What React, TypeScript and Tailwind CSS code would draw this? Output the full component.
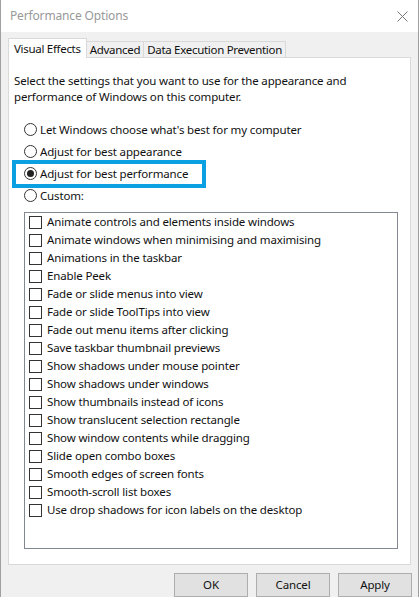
const radios = [
  { label: "Let Windows choose what's best for my computer", checked: false },
  { label: 'Adjust for best appearance', checked: false },
  { label: 'Adjust for best performance', checked: true },
  { label: 'Custom:', checked: false },
];

const effects = [
  'Animate controls and elements inside windows',
  'Animate windows when minimising and maximising',
  'Animations in the taskbar',
  'Enable Peek',
  'Fade or slide menus into view',
  'Fade or slide ToolTips into view',
  'Fade out menu items after clicking',
  'Save taskbar thumbnail previews',
  'Show shadows under mouse pointer',
  'Show shadows under windows',
  'Show thumbnails instead of icons',
  'Show translucent selection rectangle',
  'Show window contents while dragging',
  'Slide open combo boxes',
  'Smooth edges of screen fonts',
  'Smooth-scroll list boxes',
  'Use drop shadows for icon labels on the desktop',
];

function Radio({ checked }: { checked: boolean }) {
  return (
    <span className="w-[13px] h-[13px] rounded-full border border-[#333] bg-white flex items-center justify-center shrink-0">
      {checked && <span className="w-[7px] h-[7px] rounded-full bg-[#222]" />}
    </span>
  );
}

export default function App() {
  return (
    <div
      className="w-[419px] h-[597px] overflow-hidden bg-[#f0f0f0] border-l border-r border-[#a0a0a0] text-[11.5px] tracking-[-0.15px] text-[#111] flex flex-col"
      style={{ fontFamily: '"Noto Sans", "Open Sans", sans-serif' }}
    >
      {/* title bar */}
      <div className="h-[32px] bg-white flex items-center justify-between pl-[9px] pr-[9px] shrink-0">
        <span className="text-[#999] text-[12px]">Performance Options</span>
        <svg width="11" height="11" viewBox="0 0 11 11" className="mr-[1px]">
          <path d="M0.5 0.5 L10.5 10.5 M10.5 0.5 L0.5 10.5" stroke="#777" strokeWidth="1" />
        </svg>
      </div>

      {/* tabs */}
      <div className="flex items-end pl-[7px] pt-[6px] h-[25px] shrink-0 tracking-[-0.3px]">
        <div className="h-[20px] px-[5px] bg-white border border-b-0 border-[#d9d9d9] flex items-center relative z-10 -mb-px">
          Visual Effects
        </div>
        <div className="h-[16px] px-[3px] border border-l-0 border-b-0 border-[#d9d9d9] flex items-center">Advanced</div>
        <div className="h-[16px] px-[3px] border border-l-0 border-b-0 border-[#d9d9d9] flex items-center">
          Data Execution Prevention
        </div>
      </div>

      {/* panel */}
      <div className="ml-[7px] w-[403px] h-[508px] bg-white border border-[#d9d9d9] relative shrink-0">
        <p className="pl-[5px] pt-[15px] leading-[16px]">
          Select the settings that you want to use for the appearance and
          <br />
          performance of Windows on this computer.
        </p>

        <div className="pl-[15px] pt-[18px] flex flex-col gap-[9px]">
          {radios.map((r) => (
            <div key={r.label} className="flex items-center gap-[3px] h-[13px]">
              <Radio checked={r.checked} />
              <span className="leading-[16px]">{r.label}</span>
            </div>
          ))}
        </div>

        {/* highlight annotation */}
        <div className="absolute left-[3px] top-[102px] w-[194px] h-[28px] border-4 border-[#0ba0e2]" />

        <div className="ml-[15px] mt-[10px] w-[374px] h-[337px] border border-[#828790]">
          {effects.map((e) => (
            <div key={e} className="h-[18px] flex items-center pl-[4px] gap-[5px]">
              <span className="w-[13px] h-[13px] border border-[#333] bg-white shrink-0" />
              <span>{e}</span>
            </div>
          ))}
        </div>
      </div>

      {/* buttons */}
      <div className="flex justify-end gap-[8px] pr-[6px] pt-[8px]">
        {['OK', 'Cancel', 'Apply'].map((b) => (
          <button
            key={b}
            className="w-[74px] h-[24px] bg-[#e1e1e1] border border-[#adadad] flex items-center justify-center"
          >
            {b}
          </button>
        ))}
      </div>
    </div>
  );
}
